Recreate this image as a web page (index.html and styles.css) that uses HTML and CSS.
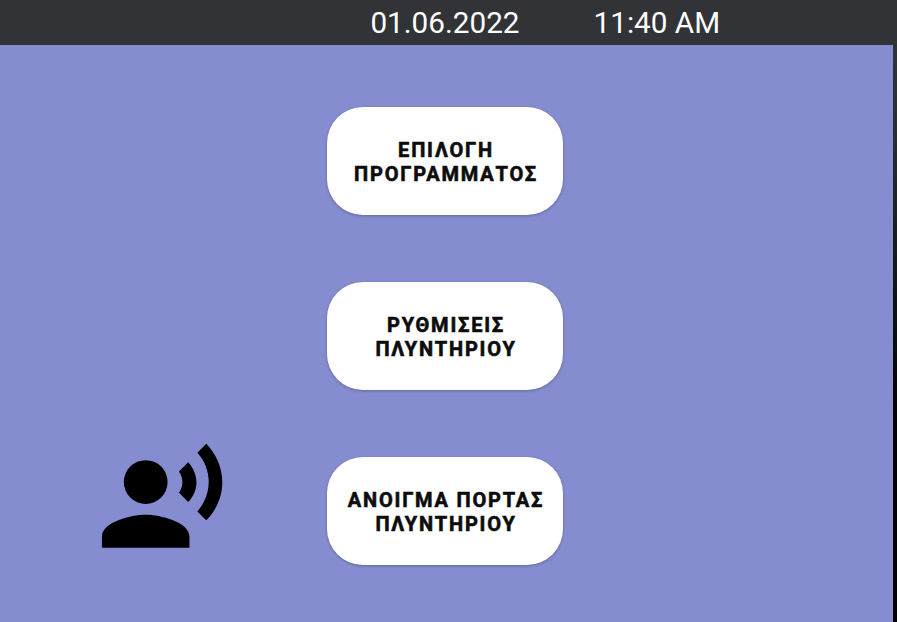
FILE: index.html
```html
<!DOCTYPE html>
<html lang="el">
<head>
<meta charset="utf-8">
<title>Πλυντήριο</title>
<link rel="stylesheet" href="styles.css">
</head>
<body>
<header class="status-bar">
  <span class="date">01.06.2022</span>
  <time class="time">11:40 AM</time>
</header>
<main class="screen">
  <div class="voice">
    <svg class="voice-icon" viewBox="-0.09 0.03 24 24" aria-hidden="true">
      <circle cx="9" cy="9" r="4"/>
      <path d="M9 15c-2.67 0-8 1.34-8 4v2h16v-2c0-2.66-5.33-4-8-4zm7.76-9.64l-1.68 1.69c.84 1.18.84 2.71 0 3.89l1.68 1.69c2.02-2.02 2.02-5.07 0-7.27zM20.07 2l-1.63 1.63c2.77 3.02 2.77 7.56 0 10.74L20.07 16c3.9-3.89 3.91-9.95 0-14z"/>
    </svg>
  </div>
  <nav class="menu">
    <button class="menu-button">ΕΠΙΛΟΓΗ<br>ΠΡΟΓΡΑΜΜΑΤΟΣ</button>
    <button class="menu-button">ΡΥΘΜΙΣΕΙΣ<br>ΠΛΥΝΤΗΡΙΟΥ</button>
    <button class="menu-button">ΑΝΟΙΓΜΑ ΠΟΡΤΑΣ<br>ΠΛΥΝΤΗΡΙΟΥ</button>
  </nav>
</main>
</body>
</html>
```
FILE: styles.css
```css
* {
  box-sizing: border-box;
}

body {
  margin: 0;
  height: 622px;
  display: flex;
  flex-direction: column;
  overflow: hidden;
  font-family: Roboto, sans-serif;
  background: linear-gradient(#323337 45px, #2b2c2f 130px, #000 420px);
}

.status-bar {
  height: 45px;
  flex: none;
  display: flex;
  align-items: center;
  gap: 74px;
  padding-left: 370.4px;
  background: #323337;
  color: #fff;
  font-size: 29.7px;
  line-height: 45px;
  white-space: nowrap;
}

.screen {
  flex: 1;
  margin-right: 4px;
  display: grid;
  grid-template-columns: 327px 236px 1fr;
  background: #858ccf;
}

.voice {
  display: flex;
  align-items: flex-end;
  padding: 0 0 58px 96px;
}

.voice-icon {
  width: 131.25px;
  height: 131.25px;
  fill: #000;
}

.menu {
  display: flex;
  flex-direction: column;
  gap: 67px;
  padding-top: 62px;
}

.menu-button {
  height: 108px;
  padding: 2px 0 0 2px;
  border: 0;
  border-radius: 36px;
  background: #fff;
  color: #0c0c0c;
  font: 700 20px/24px Roboto, sans-serif;
  letter-spacing: 1.79px;
  -webkit-text-stroke: 0.6px #0c0c0c;
  white-space: nowrap;
  box-shadow: 0 1px 3px rgba(0, 0, 0, 0.25);
}
```
